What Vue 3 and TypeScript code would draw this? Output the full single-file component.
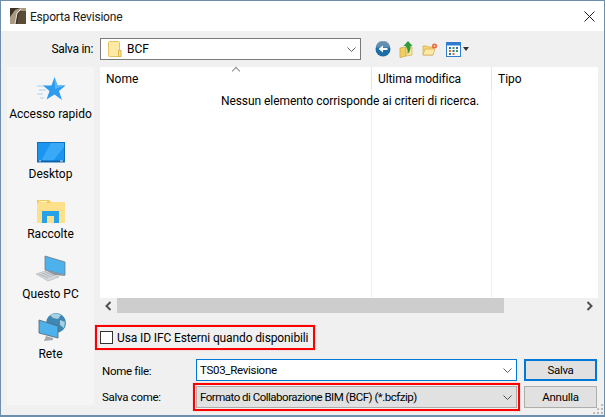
<template>
  <div class="dialog">
    <header class="titlebar">
      <svg class="app-icon" width="16" height="16" viewBox="0 0 16 16">
        <rect width="16" height="16" fill="#3d3226" />
        <path d="M0 16V9L5 2l5-2h6v3H10L7 6 5 16z" fill="#a89a83" />
        <path d="M7 16 9 5l3-2 4 0v13z" fill="#5b4b39" />
        <path d="M5 16 7 5 11 1" fill="none" stroke="#e6dfd0" stroke-width="1" />
      </svg>
      <span class="title">Esporta Revisione</span>
      <svg class="close" width="11" height="11" viewBox="0 0 11 11">
        <path d="M.5.5l10 10M10.5.5l-10 10" stroke="#1a1a1a" stroke-width="1" fill="none" />
      </svg>
    </header>

    <div class="toolbar">
      <label class="in-label">Salva in:</label>
      <div class="path-combo">
        <svg width="14" height="16" viewBox="0 0 14 16">
          <rect x=".5" y=".5" width="11" height="15" rx="1" fill="#fce9a6" stroke="#e5c365" />
          <rect x="10.500" y="9.500" width="2.500" height="6" fill="#fce08a" stroke="#e0b850" />
        </svg>
        <span class="path-text">BCF</span>
        <svg class="chev" width="9" height="5" viewBox="0 0 9 5">
          <path d="M.5.5l4 4 4-4" fill="none" stroke="#606060" />
        </svg>
      </div>
      <div class="tools">
        <svg width="16" height="16" viewBox="0 0 16 16">
          <circle cx="8" cy="8" r="7.500" fill="#1c6ea8" />
          <path d="M1 6.500a7 7 0 0 1 14 0z" fill="#7a9bb3" opacity=".75" />
          <path d="M3.500 8 8 4.500V7h4.500v2H8v2.500z" fill="#fff" />
        </svg>
        <svg width="15" height="17" viewBox="0 0 15 17">
          <path d="M1 7l6-1v9l-6 1.500z" fill="#f3cf63" stroke="#c9a13f" stroke-width=".7" />
          <path d="M7 6h6v8l-6 1z" fill="#fbe59b" stroke="#d2ae52" stroke-width=".7" />
          <path d="M9 0 13.500 5H11.500C11.500 9 11 11 8.500 13 9 10 8.500 7 6.500 5H4.500z" fill="#2e9b3c" />
        </svg>
        <svg width="16" height="13" viewBox="0 0 16 13">
          <path d="M1 12V3h4l1 1h5v8z" fill="#f7d574" stroke="#cda94a" stroke-width=".7" />
          <path d="M1 12l2-6h10l-2 6z" fill="#fce9a6" stroke="#d2ae52" stroke-width=".7" />
          <circle cx="12.500" cy="3" r="2.500" fill="#e8663a" />
          <circle cx="12.500" cy="3" r="1" fill="#fbd3b0" />
        </svg>
        <span class="view-btn">
          <svg width="15" height="15" viewBox="0 0 15 15">
            <rect x=".5" y=".5" width="14" height="14" fill="#fff" stroke="#2f7cd0" />
            <rect x="1" y="1" width="13" height="2.500" fill="#2f7cd0" />
            <rect x="3" y="5" width="2" height="2" fill="#2d6fb5" />
            <rect x="6.500" y="5" width="2" height="2" fill="#3f9b4c" />
            <rect x="10" y="5" width="2" height="2" fill="#2d6fb5" />
            <rect x="3" y="8" width="2" height="2" fill="#d8752f" />
            <rect x="6.500" y="8" width="2" height="2" fill="#2d6fb5" />
            <rect x="10" y="8" width="2" height="2" fill="#3f9b4c" />
            <rect x="3" y="11" width="2" height="2" fill="#2d6fb5" />
            <rect x="6.500" y="11" width="2" height="2" fill="#d8752f" />
          </svg>
          <i class="caret"></i>
        </span>
      </div>
    </div>

    <div class="main">
      <nav class="places">
        <div class="place">
          <svg width="30" height="26" viewBox="0 0 30 26">
            <path d="M1 9h9M3 13h7M1 17h6M4 21h4" stroke="#a8d4f5" stroke-width="1" />
            <path d="M18.500 0l3 8.500h8l-6.500 5.500 3 9-7.500-5.500-8 5 3-8.500-6.500-5.500h8.500z" fill="#2d9bf0" />
            <path d="M18.500 0l3 8.500h8L19 12z" fill="#5bb8f8" />
          </svg>
          <span>Accesso rapido</span>
        </div>
        <div class="place">
          <svg width="28" height="21" viewBox="0 0 28 21">
            <rect x=".5" y=".5" width="27" height="19.500" fill="#1b95f0" stroke="#1470b8" />
            <path d="M14 1 4 19h12l11-14V1z" fill="#3aa9f7" />
            <rect x="1" y="18.500" width="26" height="1.500" fill="#0b62ab" />
            <path d="M2 19h2M23 19h3" stroke="#dff0ff" stroke-width="1" />
          </svg>
          <span>Desktop</span>
        </div>
        <div class="place">
          <svg width="28" height="24" viewBox="0 0 28 24">
            <path d="M0 1h12l2 2h14v21H0z" fill="#fad56f" />
            <path d="M0 3h28v21H0z" fill="#fde08c" />
            <path d="M0 1h12l2 3H0z" fill="#f5c95a" />
            <rect x="2" y="2" width="8" height="1.500" fill="#fff6c9" />
            <path d="M5 24V12h17v12h-5v-7h-7v7z" fill="#27a2e8" />
          </svg>
          <span>Raccolte</span>
        </div>
        <div class="place">
          <svg width="31" height="28" viewBox="0 0 31 28">
            <path d="M10 1l20 6v13L10 15z" fill="#4db2ec" stroke="#6c7b88" stroke-width=".8" />
            <path d="M10 15l20 5v1l-11-1z" fill="#8f979e" />
            <path d="M1 19l9-3 14 6-11 4z" fill="#d5d8db" stroke="#aeb3b7" stroke-width=".6" />
            <path d="M4 19l9 4M7 18l9 4M10 17l9 4" stroke="#9fa5aa" stroke-width=".7" />
          </svg>
          <span>Questo PC</span>
        </div>
        <div class="place">
          <svg width="30" height="31" viewBox="0 0 30 31">
            <circle cx="20" cy="11" r="10" fill="#3f88b3" />
            <path d="M14 3q6-3 11 0l-3 4-5-1zM24 8l5 2-1 6-4-3z" fill="#a9cfe2" />
            <path d="M3 8l19 6v12L3 21z" fill="#4db2ec" stroke="#56626c" stroke-width=".8" />
            <path d="M10 24l7 2v2l-9 1z" fill="#a3a9ae" />
          </svg>
          <span>Rete</span>
        </div>
      </nav>

      <div class="content">
        <section class="file-list">
          <div class="rules"><i></i><i></i></div>
          <div class="columns">
            <div class="col col-name">Nome<span class="sort"></span></div>
            <div class="col col-date">Ultima modifica</div>
            <div class="col col-type">Tipo</div>
          </div>
          <p class="empty">Nessun elemento corrisponde ai criteri di ricerca.</p>
        </section>

        <div class="hscroll">
          <svg class="arrow" width="7" height="10" viewBox="0 0 7 10">
            <path d="M5.500 1 1.500 5l4 4" fill="none" stroke="#505050" stroke-width="2" />
          </svg>
          <div class="thumb"></div>
          <svg class="arrow" width="7" height="10" viewBox="0 0 7 10">
            <path d="M1.500 1l4 4-4 4" fill="none" stroke="#505050" stroke-width="2" />
          </svg>
        </div>

        <div class="option">
          <span class="checkbox"></span>
          <span class="option-text">Usa ID IFC Esterni quando disponibili</span>
        </div>

        <div class="form">
          <label>Nome file:</label>
          <div class="field name-field">
            <span>TS03_Revisione</span>
            <svg width="9" height="5" viewBox="0 0 9 5"><path d="M.5.5l4 4 4-4" fill="none" stroke="#606060" /></svg>
          </div>
          <button class="btn btn-primary">Salva</button>

          <label>Salva come:</label>
          <div class="type-wrap">
            <div class="field type-field">
              <span>Formato di Collaborazione BIM (BCF) (*.bcfzip)</span>
              <svg width="9" height="5" viewBox="0 0 9 5"><path d="M.5.5l4 4 4-4" fill="none" stroke="#505050" /></svg>
            </div>
          </div>
          <button class="btn">Annulla</button>
        </div>
      </div>
    </div>

    <div class="grip"></div>
  </div>
</template>

<script setup lang="ts">
</script>

<style>
html,
body {
  margin: 0;
  background: #f0f0f0;
}
</style>

<style scoped>
.dialog {
  position: relative;
  width: 605px;
  height: 417px;
  box-sizing: border-box;
  border: 1px solid #6d8fae;
  border-bottom-width: 2px;
  background: #f0f0f0;
  font-family: Roboto, "Noto Sans", sans-serif;
  font-size: 12px;
  color: #000;
  display: flex;
  flex-direction: column;
  overflow: hidden;
}
.titlebar {
  height: 30px;
  flex: none;
  background: #fff;
  display: flex;
  align-items: center;
  padding: 0 0 0 9px;
}
.app-icon {
  margin-right: 4px;
}
.title {
  flex: 1;
  color: #1a1a1a;
  letter-spacing: -0.2px;
  line-height: 18px;
  padding-top: 1px;
}
.close {
  margin-right: 9px;
}
.toolbar {
  height: 36px;
  flex: none;
  display: flex;
  align-items: center;
}
.in-label {
  width: 92px;
  text-align: right;
  margin-right: 7px;
  letter-spacing: -0.3px;
}
.path-combo {
  width: 261px;
  height: 22px;
  box-sizing: border-box;
  border: 1px solid #7a7a7a;
  background: #fff;
  display: flex;
  align-items: center;
  padding-left: 7px;
}
.path-text {
  flex: 1;
  margin-left: 5px;
}
.chev {
  margin-right: 4px;
}
.tools {
  display: flex;
  align-items: center;
  gap: 8px;
  margin-left: 14px;
}
.view-btn {
  display: flex;
  align-items: center;
  gap: 2px;
}
.caret {
  width: 0;
  height: 0;
  border: 3.500px solid transparent;
  border-top: 4px solid #333;
  border-bottom: 0;
}
.main {
  flex: 1;
  display: flex;
  min-height: 0;
  padding: 0 6px 10px 6px;
}
.places {
  width: 87px;
  flex: none;
  background: #f5f5f5;
  display: flex;
  flex-direction: column;
  margin-right: 6px;
}
.place {
  height: 60px;
  flex: none;
  display: flex;
  flex-direction: column;
  align-items: center;
  justify-content: flex-end;
  padding-bottom: 5px;
  box-sizing: border-box;
  gap: 3px;
}
.place span {
  line-height: 16px;
}
.content {
  flex: 1;
  display: flex;
  flex-direction: column;
  min-width: 0;
}
.file-list {
  position: relative;
  height: 231px;
  flex: none;
  background: #fff;
}
.columns {
  display: flex;
  height: 23px;
  position: relative;
}
.col {
  box-sizing: border-box;
  padding: 4px 0 0 6px;
  line-height: 16px;
  border-right: 1px solid #e5e5e5;
}
.col-name {
  width: 272px;
  position: relative;
}
.col-date {
  width: 120px;
  letter-spacing: -0.1px;
}
.col-type {
  flex: 1;
  border-right: 0;
}
.sort {
  position: absolute;
  left: 133px;
  top: 1px;
  width: 5px;
  height: 5px;
  border-left: 1px solid #8a8a8a;
  border-top: 1px solid #8a8a8a;
  transform: rotate(45deg);
}
.empty {
  margin: 0;
  text-align: center;
  line-height: 16px;
  position: relative;
  top: 3px;
  left: 1px;
  white-space: nowrap;
  letter-spacing: -0.06px;
}
.rules i {
  position: absolute;
  top: 23px;
  bottom: 0;
  width: 1px;
  background: #eaf2fb;
}
.rules i:first-child {
  left: 271px;
}
.rules i:last-child {
  left: 391px;
}
.hscroll {
  height: 15px;
  flex: none;
  display: flex;
  align-items: center;
}
.arrow {
  flex: none;
  margin: 0 5px;
}
.arrow:last-child {
  margin-left: 82px;
  margin-right: 5px;
}
.thumb {
  width: 390px;
  height: 15px;
  background: #cdcdcd;
}
.option {
  height: 25px;
  flex: none;
  box-sizing: border-box;
  width: 220px;
  margin: 12px 0 9px -5px;
  border: 2px solid #f00;
  box-shadow: 0 0 1px #f88;
  display: flex;
  align-items: center;
  padding-left: 3px;
  letter-spacing: -0.12px;
}
.checkbox {
  width: 13px;
  height: 13px;
  flex: none;
  box-sizing: border-box;
  border: 1px solid #333;
  background: #fff;
  margin-right: 4px;
}
.option-text {
  white-space: nowrap;
}
.form {
  display: grid;
  grid-template-columns: 96px 321px 73px;
  column-gap: 0;
  row-gap: 5px;
  align-items: center;
  position: relative;
  font-size: 11.500px;
  letter-spacing: -0.3px;
}
.form label {
  padding-left: 2px;
}
.form label:first-child {
  padding-top: 1px;
}
.form .btn {
  margin-left: 7px;
  width: 73px;
}
.field {
  box-sizing: border-box;
  height: 22px;
  display: flex;
  align-items: center;
  justify-content: space-between;
  padding: 0 4px 0 3px;
  white-space: nowrap;
}
.name-field {
  border: 1px solid #0078d7;
  background: #fff;
}
.type-wrap {
  border: 2px solid #f00;
  margin: -3px;
  padding: 1px;
  box-shadow: 0 0 1px #f88;
}
.type-field {
  border: 1px solid #adadad;
  background: #e1e1e1;
  letter-spacing: -0.5px;
}
.btn {
  box-sizing: border-box;
  height: 22px;
  padding: 0;
  font: inherit;
  letter-spacing: inherit;
  color: #000;
  background: #e1e1e1;
  border: 1px solid #adadad;
}
.btn-primary {
  border: 2px solid #0078d7;
}
.grip {
  position: absolute;
  right: 1px;
  bottom: 1px;
  width: 11px;
  height: 11px;
  background-image: radial-gradient(circle, #b5b5b5 1px, transparent 1.2px);
  background-size: 4px 4px;
  clip-path: polygon(100% 0, 100% 100%, 0 100%);
}
</style>
